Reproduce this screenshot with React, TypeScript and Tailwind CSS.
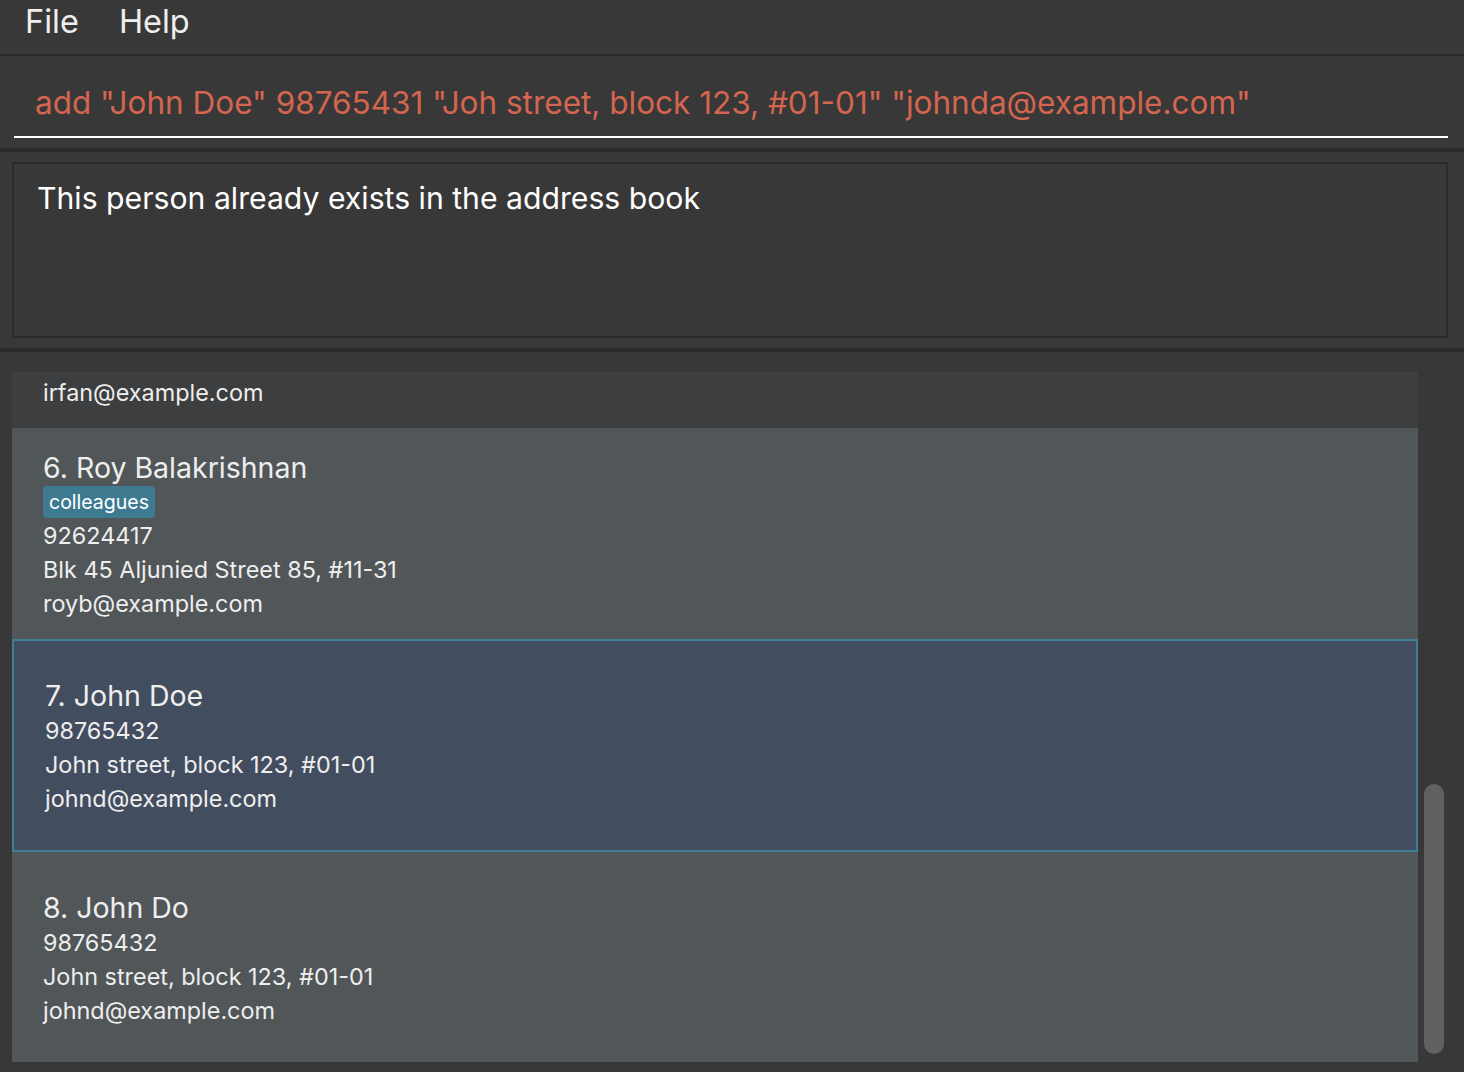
import React from "react";

type Person = {
  index: number;
  name: string;
  tags: string[];
  phone: string;
  address: string;
  email: string;
};

const people: Person[] = [
  {
    index: 5,
    name: "Irfan Ibrahim",
    tags: ["classmates"],
    phone: "92492021",
    address: "Blk 47 Tampines Street 20, #17-35",
    email: "irfan@example.com",
  },
  {
    index: 6,
    name: "Roy Balakrishnan",
    tags: ["colleagues"],
    phone: "92624417",
    address: "Blk 45 Aljunied Street 85, #11-31",
    email: "royb@example.com",
  },
  {
    index: 7,
    name: "John Doe",
    tags: [],
    phone: "98765432",
    address: "John street, block 123, #01-01",
    email: "johnd@example.com",
  },
  {
    index: 8,
    name: "John Do",
    tags: [],
    phone: "98765432",
    address: "John street, block 123, #01-01",
    email: "johnd@example.com",
  },
];

function PersonCard({ person, dark, selected }: { person: Person; dark: boolean; selected: boolean }) {
  const base = selected
    ? "bg-[#424d5f] border-2 border-[#3e7f96] pl-[31px] h-[213px]"
    : dark
      ? "bg-[#3c3e3f] pl-[31px] h-[210px]"
      : "bg-[#515658] pl-[31px] h-[211px]";
  return (
    <div className={`${base} shrink-0 flex flex-col justify-center pt-[3px] text-[#eeeeee]`}>
      <div className="text-[28.5px] leading-[36px]">
        {person.index}. {person.name}
      </div>
      {person.tags.length > 0 && (
        <div className="flex gap-2 h-[33px] items-center">
          {person.tags.map((t) => (
            <span key={t} className="bg-[#3e7b91] rounded-[3px] px-[6px] text-[19.5px] leading-[32px] text-white">
              {t}
            </span>
          ))}
        </div>
      )}
      <div className="text-[23.4px] leading-[34px]">{person.phone}</div>
      <div className="text-[23.4px] leading-[34px]">{person.address}</div>
      <div className="text-[23.4px] leading-[34px]">{person.email}</div>
    </div>
  );
}

export default function App() {
  return (
    <div
      className="w-[1464px] h-[1072px] bg-[#383838] flex flex-col overflow-hidden"
      style={{ fontFamily: "Inter, 'Noto Sans', sans-serif" }}
    >
      {/* menu bar */}
      <div className="h-[56px] shrink-0 border-b-2 border-[#2b2b2b] flex items-center gap-[40px] px-[25px] pb-[10px] text-[32.5px] text-[#eeeeee]">
        <span>File</span>
        <span>Help</span>
      </div>

      {/* command box */}
      <div className="h-[96px] shrink-0 border-b-4 border-[#2b2b2b] px-[14px] pr-[16px] flex flex-col">
        <div className="h-[82px] shrink-0 border-b-2 border-white flex items-end pb-[15px] pl-[21px] text-[31.5px] leading-[36px] text-[#d4654f] whitespace-nowrap">
          add "John Doe" 98765431 "Joh street, block 123, #01-01" "johnda@example.com"
        </div>
      </div>

      {/* result display */}
      <div className="h-[200px] shrink-0 border-b-4 border-[#2b2b2b] pt-[10px] pb-[10px] pl-[12px] pr-[16px]">
        <div className="h-full border-2 border-[#2b2b2b] pl-[23px] pt-[14px] text-[30.2px] leading-[40px] text-white">
          This person already exists in the address book
        </div>
      </div>

      {/* person list */}
      <div className="flex-1 min-h-0 flex pt-[20px] pl-[12px] pb-[10px]">
        <div className="w-[1406px] overflow-hidden">
          <div className="-mt-[154px] flex flex-col">
            {people.map((p, i) => (
              <PersonCard key={p.index} person={p} dark={i % 2 === 0} selected={p.index === 7} />
            ))}
          </div>
        </div>
        <div className="flex-1 relative">
          <div className="absolute left-[6px] w-[20px] top-[412px] h-[270px] rounded-full bg-[#616161]" />
        </div>
      </div>
    </div>
  );
}
